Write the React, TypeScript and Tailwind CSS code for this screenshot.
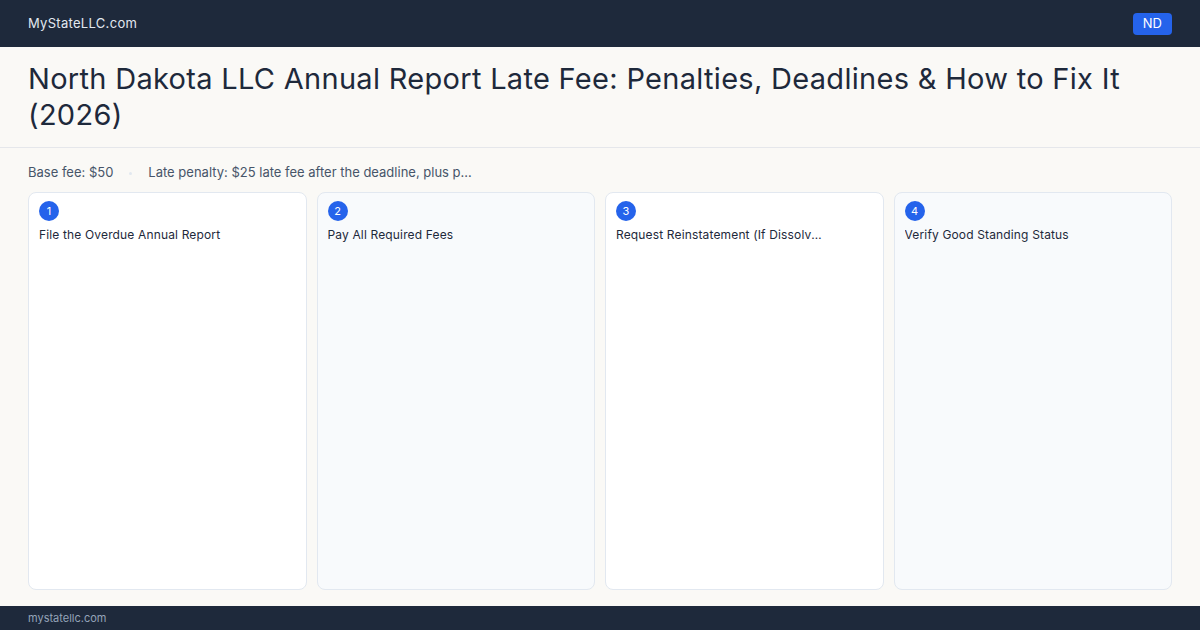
import React from "react";

const steps = [
  "File the Overdue Annual Report",
  "Pay All Required Fees",
  "Request Reinstatement (If Dissolved by the Secretary of State)",
  "Verify Good Standing Status",
];

const App: React.FC = () => {
  return (
    <div
      className="w-[1200px] h-[630px] flex flex-col bg-[#faf9f6] overflow-hidden"
      style={{ fontFamily: "Inter, 'Noto Sans', sans-serif" }}
    >
      {/* Top bar */}
      <header className="h-[47px] shrink-0 bg-[#1e293b] flex items-center justify-between px-7">
        <span className="text-[13px] text-[#e2e8f0] tracking-[0.3px]">MyStateLLC.com</span>
        <span className="h-[22px] px-[10px] rounded bg-[#2563eb] text-white text-[13px] flex items-center">
          ND
        </span>
      </header>

      {/* Title */}
      <div className="h-[101px] shrink-0 border-b border-[#e5e7eb] px-7 flex items-center">
        <h1 className="text-[29px] leading-[36px] text-[#1e293b] font-normal tracking-[0.3px]">
          North Dakota LLC Annual Report Late Fee: Penalties, Deadlines &amp; How to Fix It (2026)
        </h1>
      </div>

      {/* Fee line */}
      <div className="h-[44px] shrink-0 px-7 pt-[6px] flex items-center gap-4 text-[13px] text-[#475569]">
        <span>Base fee: $50</span>
        <span className="w-[3px] h-[3px] rounded-full bg-[#e2e8f0]" />
        <span>Late penalty: $25 late fee after the deadline, plus p…</span>
      </div>

      {/* Step cards */}
      <div className="flex-1 px-7 pb-4 grid grid-cols-4 gap-[10px]">
        {steps.map((s, i) => (
          <div
            key={i}
            className={`min-w-0 rounded-lg border border-[#e2e8f0] px-[10px] pt-[8px] ${
              i % 2 === 0 ? "bg-white" : "bg-[#f8fafc]"
            }`}
          >
            <div className="w-5 h-5 rounded-full bg-[#2563eb] text-white text-[11px] flex items-center justify-center">
              {i + 1}
            </div>
            <div className="mt-[6px] text-[12px] leading-[16px] text-[#1e293b] tracking-[0.15px] truncate pr-[50px]">
              {s}
            </div>
          </div>
        ))}
      </div>

      {/* Footer */}
      <footer className="h-[24px] shrink-0 bg-[#1e293b] flex items-center px-7">
        <span className="text-[11px] text-[#94a3b8]">mystatellc.com</span>
      </footer>
    </div>
  );
};

export default App;
